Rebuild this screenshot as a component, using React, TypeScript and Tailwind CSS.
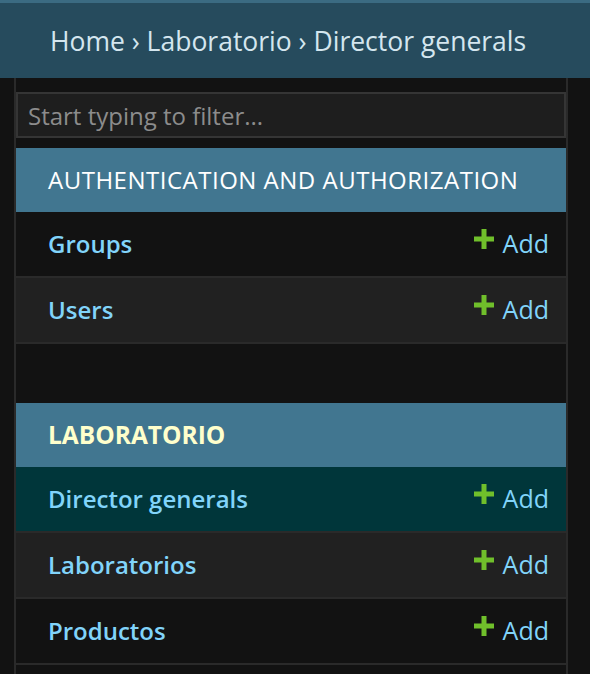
import { Fragment } from "react";

type Model = { name: string; selected?: boolean };

type AppGroup = { title: string; bold?: boolean; models: Model[] };

const apps: AppGroup[] = [
  {
    title: "AUTHENTICATION AND AUTHORIZATION",
    models: [{ name: "Groups" }, { name: "Users" }],
  },
  {
    title: "LABORATORIO",
    bold: true,
    models: [
      { name: "Director generals", selected: true },
      { name: "Laboratorios" },
      { name: "Productos" },
    ],
  },
];

function PlusIcon() {
  return (
    <svg width="20" height="20" viewBox="0 0 20 20" className="mb-[10px]">
      <rect x="7.5" y="0" width="5" height="20" fill="#70bf2b" />
      <rect x="0" y="7.5" width="20" height="5" fill="#70bf2b" />
    </svg>
  );
}

function ModelRow({ model, index }: { model: Model; index: number }) {
  const bg = model.selected
    ? "bg-[#00363a]"
    : index % 2 === 0
      ? "bg-[#121212]"
      : "bg-[#212121]";
  return (
    <div
      className={`flex h-[66px] items-center justify-between border-b-2 border-[#2a2a2a] pl-[32px] pr-[17px] ${bg}`}
    >
      <a className="text-[24px] font-semibold text-[#81d4fa]">{model.name}</a>
      <a className="flex items-center gap-[9px] text-[25px] text-[#81d4fa]">
        <PlusIcon />
        Add
      </a>
    </div>
  );
}

export default function App() {
  return (
    <div
      className="min-h-screen bg-[#121212]"
      style={{ fontFamily: '"Open Sans", "Noto Sans", sans-serif' }}
    >
      <div className="flex h-[78px] items-center border-t-[3px] border-[#3b6b82] bg-[#264b5d] pl-[50px] pt-[2px] text-[26.5px] text-[#d4e6ef]">
        Home › Laboratorio › Director generals
      </div>

      <nav className="ml-[14px] w-[554px] border-x-2 border-[#2a2a2a] pt-[14px] pb-[20px]">
        <input
          placeholder="Start typing to filter..."
          className="h-[46px] w-full border-2 border-[#353535] bg-[#1e1e1e] px-[10px] text-[24px] text-white outline-none placeholder:text-[#8c8c8c]"
        />

        <div className="mt-[10px]">
          {apps.map((app, i) => (
            <Fragment key={app.title}>
              {i > 0 && <div className="h-[59px]" />}
              <div className="flex h-[64px] items-center bg-[#417690] pl-[32px]">
                <span
                  className={
                    app.bold
                      ? "text-[24.5px] font-bold text-[#ffffcc]"
                      : "text-[24px] tracking-[0.5px] text-white"
                  }
                >
                  {app.title}
                </span>
              </div>
              {app.models.map((m, j) => (
                <ModelRow key={m.name} model={m} index={j} />
              ))}
            </Fragment>
          ))}
        </div>
      </nav>
    </div>
  );
}
